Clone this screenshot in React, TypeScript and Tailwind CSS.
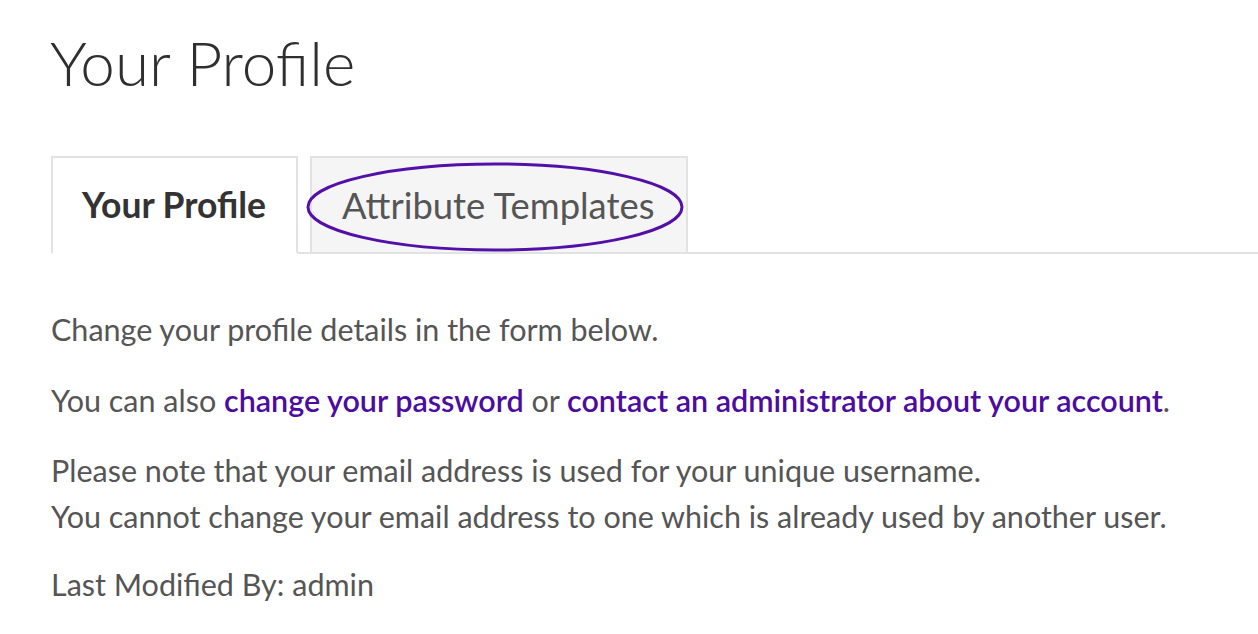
import React from 'react';

// Profile page with tabs; the inactive tab is circled as an annotation
export default function App() {
  return (
    <div className="min-h-[634px] bg-white font-['Lato','Open_Sans',sans-serif] text-[#555] overflow-hidden">
      <h1 className="pl-[50px] pt-[26px] text-[62px] leading-[72px] font-light text-[#2f2f2f]">
        Your Profile
      </h1>

      {/* Tabs */}
      <div className="ml-[51px] mt-[58px] flex items-end gap-[12px] border-b-2 border-[#e2e2e2]">
        <div className="-mb-[2px] flex h-[98px] items-center border-2 border-[#e2e2e2] border-b-white bg-white pl-[29px] pr-[30px] text-[35.5px] font-bold text-[#333]">
          Your Profile
        </div>
        <div className="relative -mb-[2px] flex h-[98px] items-center border-2 border-[#e2e2e2] bg-[#f5f5f5] pl-[30px] pr-[32px] text-[36.4px] text-[#555]">
          Attribute Templates
          <svg
            className="absolute left-[-6px] top-[4px]"
            width="378"
            height="90"
            viewBox="0 0 378 90"
          >
            <ellipse cx="189" cy="45" rx="187" ry="43" fill="none" stroke="#5210a8" strokeWidth="3" />
          </svg>
        </div>
      </div>

      {/* Body */}
      <div className="pl-[51px] pt-[52px] text-[30.5px] leading-[46px]">
        <p>Change your profile details in the form below.</p>
        <p className="mt-[25px]">
          You can also{' '}
          <a href="#" className="font-semibold text-[#4b0c9f]">change your password</a>{' '}
          or{' '}
          <a href="#" className="font-semibold text-[#4b0c9f]">contact an administrator about your account</a>.
        </p>
        <p className="mt-[24px]">
          Please note that your email address is used for your unique username.
          <br />
          You cannot change your email address to one which is already used by another user.
        </p>
        <p className="mt-[22px]">Last Modified By: admin</p>
      </div>
    </div>
  );
}
